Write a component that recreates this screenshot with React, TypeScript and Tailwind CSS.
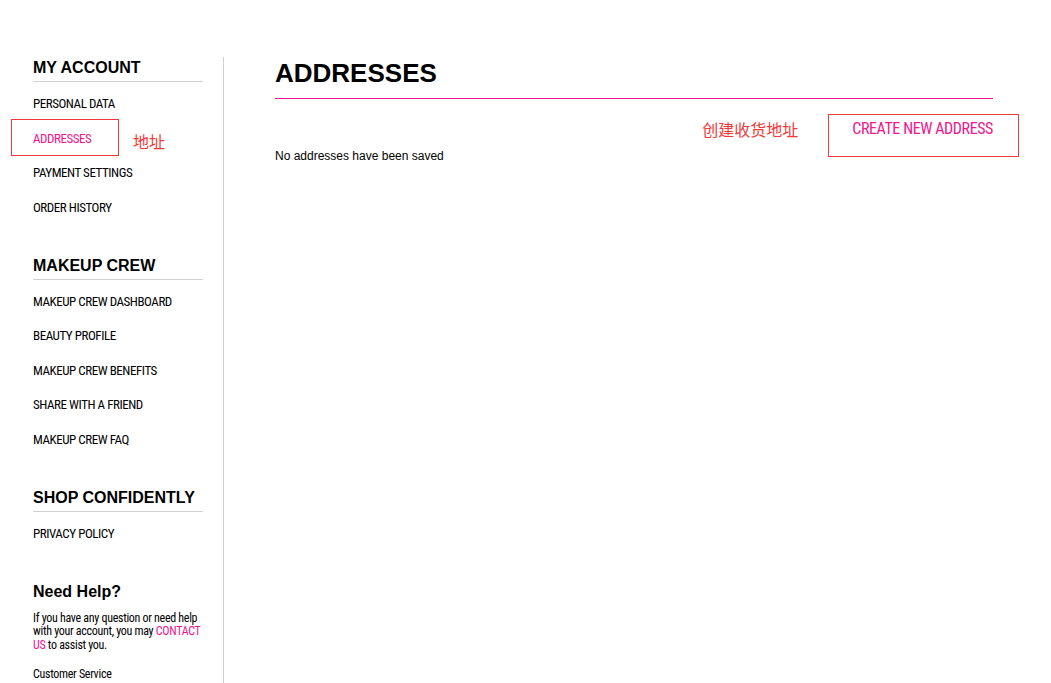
const narrow = "font-['Liberation_Sans_Narrow','Roboto_Condensed','Liberation_Sans',Arial,sans-serif]";

const sections = [
  {
    title: "MY ACCOUNT",
    items: ["PERSONAL DATA", "ADDRESSES", "PAYMENT SETTINGS", "ORDER HISTORY"],
  },
  {
    title: "MAKEUP CREW",
    items: [
      "MAKEUP CREW DASHBOARD",
      "BEAUTY PROFILE",
      "MAKEUP CREW BENEFITS",
      "SHARE WITH A FRIEND",
      "MAKEUP CREW FAQ",
    ],
  },
  {
    title: "SHOP CONFIDENTLY",
    items: ["PRIVACY POLICY"],
  },
];

function Sidebar() {
  return (
    <aside className="w-[224px] shrink-0 border-r border-[#cfcfcf] pl-[33px] pr-[20px] pt-[2px]">
      {sections.map((s, i) => (
        <div key={s.title} className={i === 0 ? "" : "mt-[32px]"}>
          <h2 className="border-b border-b-[#d0d0d0] pb-[4px] text-[16px] font-bold leading-[18px] text-black">
            {s.title}
          </h2>
          <ul className="mt-[5px]">
            {s.items.map((item) => {
              const active = item === "ADDRESSES";
              return (
                <li key={item} className="relative flex h-[34.4px] items-center">
                  <a
                    className={`${narrow} text-[13px] tracking-[-0.45px] ${
                      active ? "text-[#f0168c]" : "text-black"
                    }`}
                  >
                    {item}
                  </a>
                  {active && (
                    <>
                      {/* annotation */}
                      <span className="absolute -left-[22px] top-[-2px] h-[37px] w-[108px] border border-[#f03a3a]" />
                      <span className="absolute left-[100px] top-[10px] font-['Noto_Sans_CJK_SC',sans-serif] text-[16px] leading-[20px] text-[#f03a3a]">
                        地址
                      </span>
                    </>
                  )}
                </li>
              );
            })}
          </ul>
        </div>
      ))}

      <h3 className="mt-[31px] text-[16px] font-bold leading-[20px] text-black">Need Help?</h3>
      <p className={`${narrow} -mr-[4px] mt-[10px] text-[12px] leading-[13.5px] tracking-[-0.3px] text-black`}>
        If you have any question or need help with your account, you may{" "}
        <a className="text-[#f0168c]">CONTACT</a> <a className="text-[#f0168c]">US</a> to assist you.
      </p>
      <p className={`${narrow} mt-[16px] pb-[4px] text-[12px] leading-[13.5px] tracking-[-0.3px] text-black`}>
        Customer Service
      </p>
    </aside>
  );
}

export default function App() {
  return (
    <div className="min-h-[683px] bg-white font-['Liberation_Sans',Arial,sans-serif]">
      <div className="flex pt-[57px]">
        <Sidebar />

        <main className="w-[769px] pl-[51px] pt-px">
          <h1 className="border-b border-b-[#f0168c] pb-[10px] text-[26px] font-bold leading-[30px] text-black">
            ADDRESSES
          </h1>

          <div className="mt-[22px] flex h-[16px] justify-end">
            <div className="relative">
              <a className={`${narrow} block text-[16px] leading-[16px] tracking-[-0.4px] text-[#f0168c]`}>
                CREATE NEW ADDRESS
              </a>
              {/* annotation */}
              <span className="absolute -left-[24px] -right-[26px] -top-[7px] h-[43px] border border-[#f03a3a]" />
              <span className="absolute -left-[150px] -top-[2px] whitespace-nowrap font-['Noto_Sans_CJK_SC',sans-serif] text-[16px] leading-[20px] text-[#f03a3a]">
                创建收货地址
              </span>
            </div>
          </div>

          <p className="mt-[11px] text-[12px] leading-[16px] text-black">No addresses have been saved</p>
        </main>
      </div>
    </div>
  );
}
